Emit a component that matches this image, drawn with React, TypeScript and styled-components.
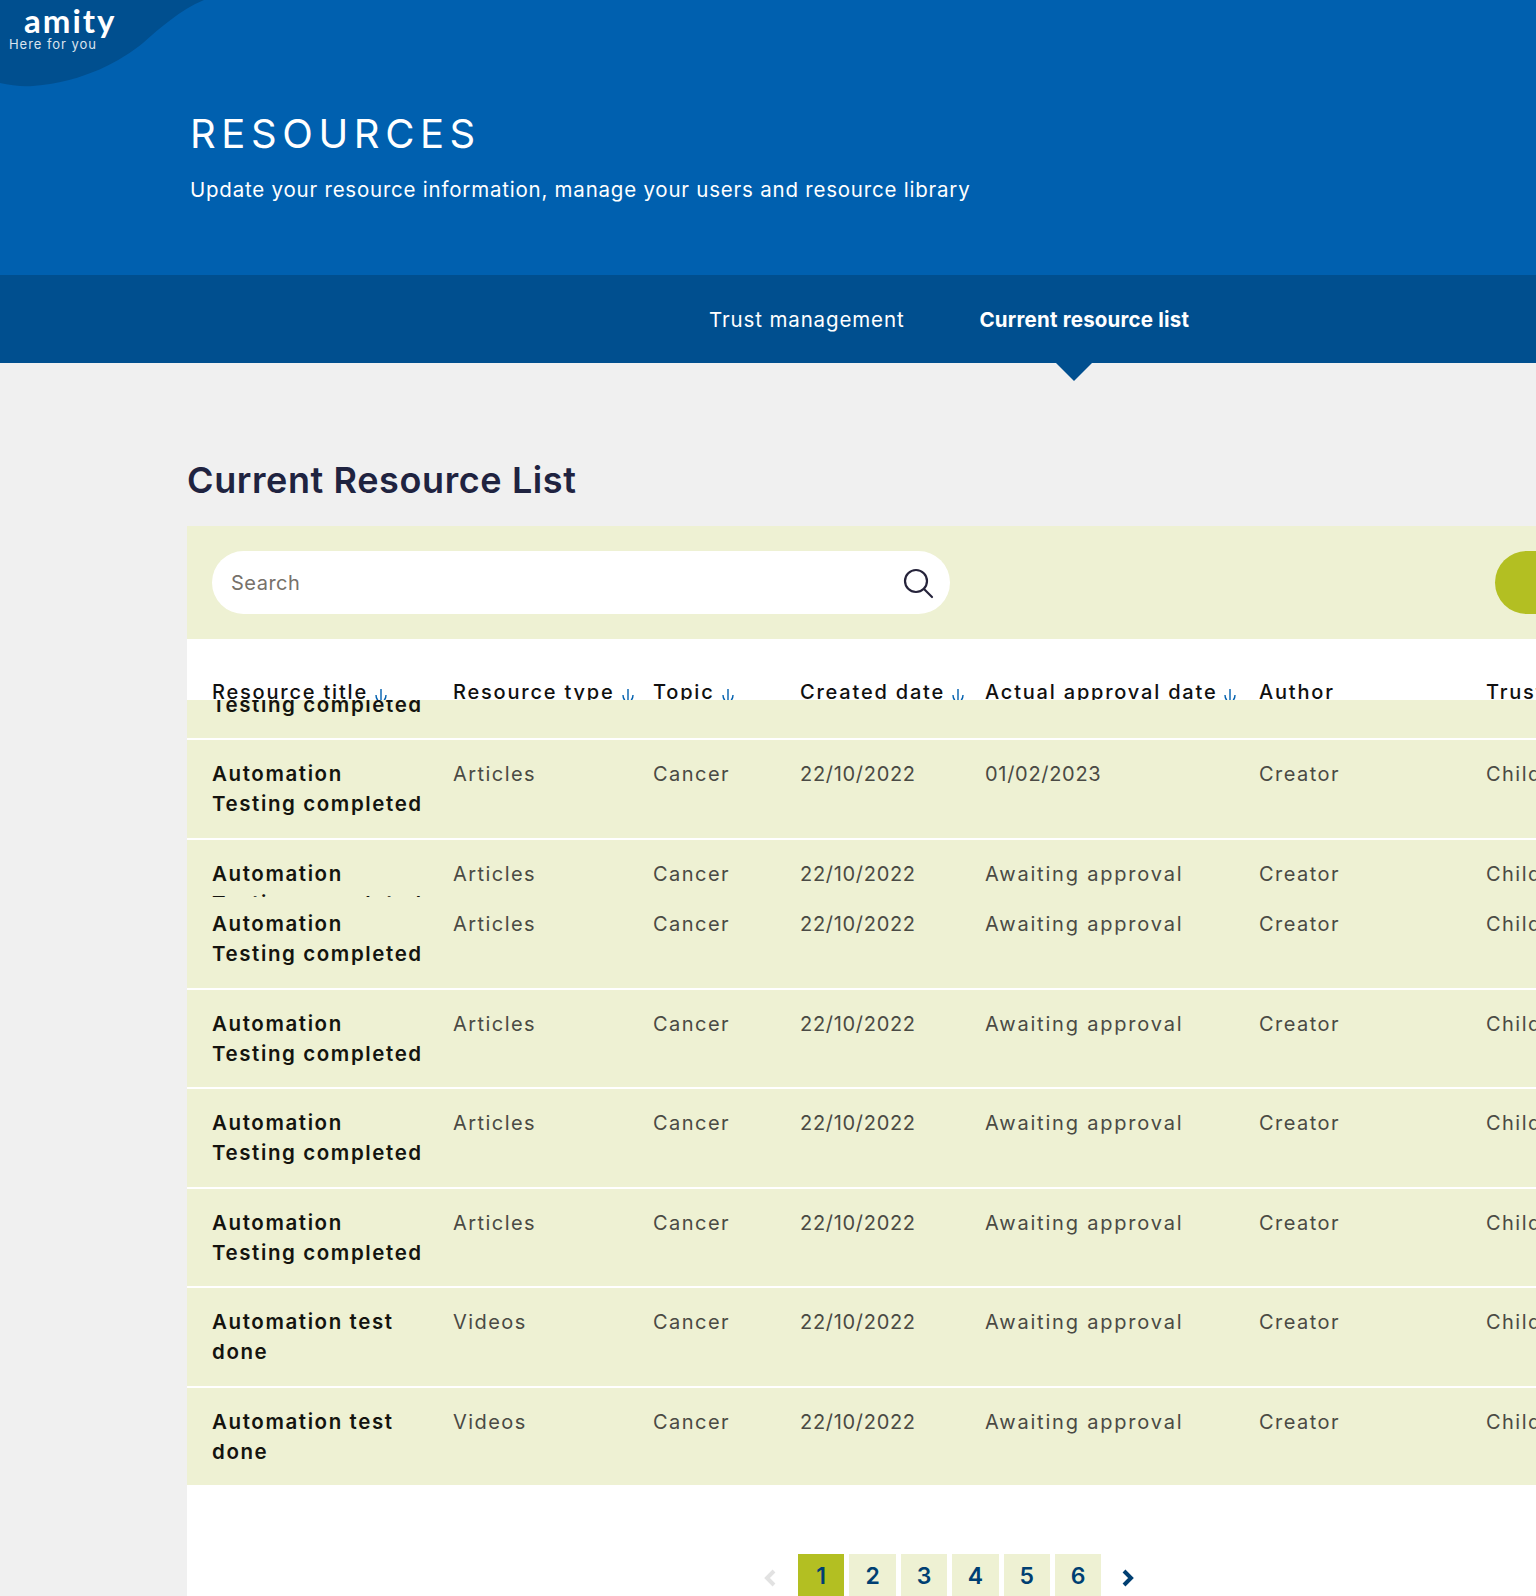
import styled, { createGlobalStyle } from 'styled-components';

const GlobalStyle = createGlobalStyle`
  html, body {
    margin: 0;
    padding: 0;
    background: #f0f0f0;
    overflow-x: hidden;
  }
  body {
    font-family: Inter, "Noto Sans", sans-serif;
  }
`

const Page = styled.div`
  width: 1536px;
  height: 1596px;
  overflow: hidden;
  position: relative;
`
const Hero = styled.header`
  position: relative;
  height: 275px;
  padding: 111px 0 0 190px;
  box-sizing: border-box;
  background: #0060af;
  color: #fff;
`
const Wave = styled.svg`
  position: absolute;
  top: 0;
  left: 0;
`
const Logo = styled.div`
  position: absolute;
  top: 3px;
  left: 9px;
  color: #fff;
`
const LogoName = styled.div`
  margin-left: 15px;
  font-family: Lato, sans-serif;
  font-size: 33px;
  line-height: 34px;
  font-weight: 700;
  letter-spacing: 2px;
`
const LogoTag = styled.div`
  font-size: 13px;
  line-height: 15px;
  letter-spacing: 0.95px;
  opacity: 0.85;
`
const Title = styled.h1`
  margin: 0;
  font-size: 40px;
  line-height: 46px;
  font-weight: 400;
  letter-spacing: 5.6px;
`
const Subtitle = styled.p`
  margin: 20px 0 0;
  font-size: 20.5px;
  line-height: 26px;
  letter-spacing: 0.78px;
`
const Nav = styled.nav`
  position: relative;
  height: 88px;
  background: #004f8f;
  display: flex;
  align-items: center;
  padding-left: 709px;
  gap: 75px;
  font-size: 20.5px;
  color: #fff;
`
const NavItem = styled.div<{ $active?: boolean }>`
  font-weight: ${(p) => (p.$active ? 700 : 400)};
  letter-spacing: ${(p) => (p.$active ? '0.2px' : '0.87px')};
  position: relative;
  &::after {
    display: ${(p) => (p.$active ? 'block' : 'none')};
    content: '';
    position: absolute;
    left: 77px;
    top: 56px;
    border-left: 18px solid transparent;
    border-right: 18px solid transparent;
    border-top: 18px solid #004f8f;
  }
`
const Main = styled.main`
  padding: 95px 0 0 187px;
`
const Heading = styled.h2`
  margin: 0 0 24px;
  font-size: 36px;
  line-height: 44px;
  font-weight: 600;
  letter-spacing: 0.6px;
  color: #1f2340;
`
const Panel = styled.section`
  width: 1500px;
  background: #fff;
`
const FilterBar = styled.div`
  height: 113px;
  box-sizing: border-box;
  padding: 25px;
  background: #eef1d3;
  display: flex;
  gap: 545px;
`
const SearchBox = styled.div`
  flex: none;
  width: 738px;
  height: 63px;
  box-sizing: border-box;
  padding: 0 16px 0 19px;
  border-radius: 32px;
  background: #fff;
  display: flex;
  align-items: center;
  justify-content: space-between;
  font-size: 20px;
  letter-spacing: 0.5px;
  color: #77716a;
`
const AddButton = styled.div`
  flex: none;
  width: 167px;
  height: 63px;
  border-radius: 32px;
  background: #b3bf22;
`
const HeaderRow = styled.div`
  height: 61px;
  overflow: hidden;
  display: grid;
  grid-template-columns: 241px 200px 147px 185px 274px 227px 1fr;
  padding: 38px 0 0 25px;
  box-sizing: border-box;
  font-size: 20px;
  line-height: 30px;
  letter-spacing: 1.8px;
  font-weight: 500;
  color: #101010;
`
const HeaderCell = styled.div`
  white-space: nowrap;
  display: flex;
  gap: 6px;
`
const SortIcon = styled.svg`
  margin-top: 11px;
  flex: none;
`
const Body = styled.div`
  background: #eef1d3;
`
const Row = styled.div<{ $height: number; $offset?: number; $last?: boolean }>`
  height: ${(p) => p.$height}px;
  box-sizing: border-box;
  overflow: hidden;
  border-bottom: ${(p) => (p.$last ? 'none' : '2px solid #fff')};
  & > div {
    margin-top: ${(p) => p.$offset ?? 0}px;
  }
`
const RowInner = styled.div`
  display: grid;
  grid-template-columns: 241px 200px 147px 185px 274px 227px 1fr;
  padding: 19px 0 0 25px;
  font-size: 20px;
  line-height: 30px;
  letter-spacing: 1.45px;
  color: #4a4a44;
`
const NameCell = styled.div`
  font-size: 20.5px;
  font-weight: 600;
  letter-spacing: 1.6px;
  color: #14140f;
  width: 215px;
`
const DateCell = styled.div`
  letter-spacing: 0.7px;
`
const ApprovalCell = styled.div<{ $pending: boolean }>`
  letter-spacing: ${(p) => (p.$pending ? '1.8px' : '0.7px')};
`
const Pagination = styled.div`
  margin: 69px 0 0 577px;
  display: flex;
  align-items: center;
`
const PageButton = styled.div<{ $active?: boolean }>`
  width: 46.4px;
  height: 43px;
  margin-right: 5px;
  display: flex;
  align-items: center;
  justify-content: center;
  background: ${(p) => (p.$active ? '#b3bf22' : '#eef1d3')};
  color: #003f72;
  font-size: 23px;
  font-weight: 600;
`
const Chevron = styled.svg<{ $next?: boolean }>`
  margin: ${(p) => (p.$next ? '5px 0 0 16px' : '5px 22px 0 0')};
`

const Sort = () => (
  <SortIcon width="14" height="16" viewBox="0 0 14 16" fill="none" stroke="#0060af" strokeWidth="1.4">
    <path d="M7 1v13M2 7c0 4 2.500 7 5 7s5-3 5-7" />
  </SortIcon>
)

const headers = [
  { label: 'Resource title', sort: true },
  { label: 'Resource type', sort: true },
  { label: 'Topic', sort: true },
  { label: 'Created date', sort: true },
  { label: 'Actual approval date', sort: true },
  { label: 'Author' },
  { label: 'Trust' },
]

const rows = [
  { height: 40, offset: -59, name: 'Automation Testing completed', type: 'Articles', approval: 'Awaiting approval' },
  { height: 99.5, name: 'Automation Testing completed', type: 'Articles', approval: '01/02/2023' },
  { height: 57, name: 'Automation Testing completed', type: 'Articles', approval: 'Awaiting approval', open: true },
  { height: 93, offset: -7, name: 'Automation Testing completed', type: 'Articles', approval: 'Awaiting approval' },
  { height: 99.5, name: 'Automation Testing completed', type: 'Articles', approval: 'Awaiting approval' },
  { height: 99.5, name: 'Automation Testing completed', type: 'Articles', approval: 'Awaiting approval' },
  { height: 99.5, name: 'Automation Testing completed', type: 'Articles', approval: 'Awaiting approval' },
  { height: 99.5, name: 'Automation test done', type: 'Videos', approval: 'Awaiting approval' },
  { height: 97.5, name: 'Automation test done', type: 'Videos', approval: 'Awaiting approval', last: true },
]

export default function App() {
  return (
    <Page>
      <GlobalStyle />
      <Hero>
        <Wave width="204" height="88" viewBox="0 0 204 88">
          <path d="M0 0H204C180 10 160 28 143 43C122 60 85 82 33 86C22 87 10 85 0 83Z" fill="#004f8f" />
        </Wave>
        <Logo>
          <LogoName>amity</LogoName>
          <LogoTag>Here for you</LogoTag>
        </Logo>
        <Title>RESOURCES</Title>
        <Subtitle>Update your resource information, manage your users and resource library</Subtitle>
      </Hero>
      <Nav>
        <NavItem>Trust management</NavItem>
        <NavItem $active>Current resource list</NavItem>
      </Nav>
      <Main>
        <Heading>Current Resource List</Heading>
        <Panel>
          <FilterBar>
            <SearchBox>
              Search
              <svg width="32" height="32" viewBox="0 0 32 32" fill="none" stroke="#25233a" strokeWidth="2.2" strokeLinecap="round">
                <circle cx="14" cy="14" r="11" />
                <path d="M22 22l8 8" />
              </svg>
            </SearchBox>
            <AddButton />
          </FilterBar>
          <HeaderRow>
            {headers.map((h) => (
              <HeaderCell key={h.label}>
                {h.label}
                {h.sort && <Sort />}
              </HeaderCell>
            ))}
          </HeaderRow>
          <Body>
            {rows.map((r, i) => (
              <Row key={i} $height={r.height} $offset={r.offset} $last={r.last || r.open}>
                <RowInner>
                  <NameCell>{r.name}</NameCell>
                  <div>{r.type}</div>
                  <div>Cancer</div>
                  <DateCell>22/10/2022</DateCell>
                  <ApprovalCell $pending={r.approval !== '01/02/2023'}>{r.approval}</ApprovalCell>
                  <div>Creator</div>
                  <div>Children</div>
                </RowInner>
              </Row>
            ))}
          </Body>
          <Pagination>
            <Chevron width="12" height="18" viewBox="0 0 12 18" fill="none" stroke="#e2e2e2" strokeWidth="4">
              <path d="M10 2L3 9l7 7" />
            </Chevron>
            {[1, 2, 3, 4, 5, 6].map((n) => (
              <PageButton key={n} $active={n === 1}>{n}</PageButton>
            ))}
            <Chevron $next width="12" height="18" viewBox="0 0 12 18" fill="none" stroke="#003f72" strokeWidth="4">
              <path d="M2 2l7 7-7 7" />
            </Chevron>
          </Pagination>
        </Panel>
      </Main>
    </Page>
  )
}
